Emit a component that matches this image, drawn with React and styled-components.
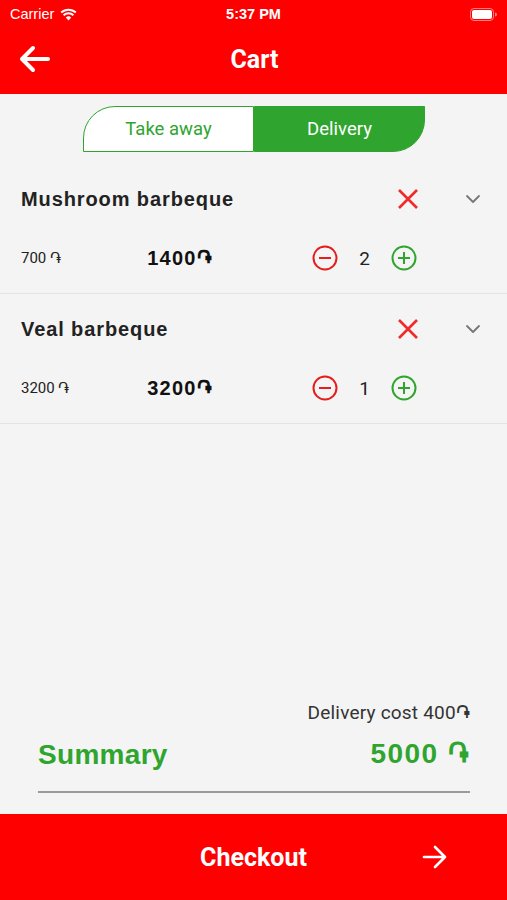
import React from 'react';
import styled, { createGlobalStyle } from 'styled-components';

const GlobalStyle = createGlobalStyle`
  html, body {
    margin: 0;
    padding: 0;
    background: #f4f4f4;
  }
  * {
    box-sizing: border-box;
  }
`;

const items = [
  { id: 1, title: 'Mushroom barbeque', price: '700 ֏', total: '1400֏', qty: 2 },
  { id: 2, title: 'Veal barbeque', price: '3200 ֏', total: '3200֏', qty: 1 },
];

const WifiIcon = () => (
  <svg width="17" height="13" viewBox="0 0 17 13">
    <path d="M8.5 12.5 L5.8 9.4 A4 4 0 0 1 11.2 9.4 Z" fill="#fff" />
    <path d="M3.6 7.2 A7 7 0 0 1 13.4 7.2" stroke="#fff" strokeWidth="2" fill="none" />
    <path d="M1.2 4.6 A10.6 10.6 0 0 1 15.8 4.6" stroke="#fff" strokeWidth="2" fill="none" />
  </svg>
);

const BatteryIcon = () => (
  <svg width="27" height="13" viewBox="0 0 27 13">
    <rect x="0.5" y="0.5" width="23" height="12" rx="3.5" stroke="rgba(255,255,255,0.5)" fill="none" />
    <rect x="2" y="2" width="20" height="9" rx="2" fill="#fff" />
    <path d="M25 4.5 A2 2 0 0 1 25 8.5 Z" fill="rgba(255,255,255,0.5)" />
  </svg>
);

const ArrowLeft = () => (
  <svg width="32" height="28" viewBox="0 0 32 28">
    <path d="M30 14 H4 M15 3 L4 14 L15 25" stroke="#fff" strokeWidth="4" strokeLinecap="round" strokeLinejoin="round" fill="none" />
  </svg>
);

const ArrowRight = () => (
  <svg width="26" height="24" viewBox="0 0 26 24">
    <path d="M2 12 H23 M13 2 L23 12 L13 22" stroke="#fff" strokeWidth="2.6" strokeLinecap="round" strokeLinejoin="round" fill="none" />
  </svg>
);

const CrossIcon = () => (
  <svg width="22" height="22" viewBox="0 0 22 22">
    <path d="M2 2 L20 20 M20 2 L2 20" stroke="#ee2a2a" strokeWidth="2.6" fill="none" />
  </svg>
);

const ChevronIcon = () => (
  <svg width="16" height="10" viewBox="0 0 16 10">
    <path d="M2 2 L8 8 L14 2" stroke="#777" strokeWidth="1.8" strokeLinecap="round" strokeLinejoin="round" fill="none" />
  </svg>
);

const CircleIcon = ({ color, plus }) => (
  <svg width="26" height="26" viewBox="0 0 26 26">
    <circle cx="13" cy="13" r="11.5" stroke={color} strokeWidth="2" fill="none" />
    <path d="M7 13 H19" stroke={color} strokeWidth="2" />
    {plus && <path d="M13 7 V19" stroke={color} strokeWidth="2" />}
  </svg>
);

const App = () => {
  return (
    <>
      <GlobalStyle />
      <Page>
        <Header>
          <StatusBar>
            <StatusLeft>
              Carrier <WifiIcon />
            </StatusLeft>
            <StatusTime>5:37 PM</StatusTime>
            <StatusRight>
              <BatteryIcon />
            </StatusRight>
          </StatusBar>
          <NavBar>
            <BackButton>
              <ArrowLeft />
            </BackButton>
            <NavTitle>Cart</NavTitle>
          </NavBar>
        </Header>

        <Content>
          <SegmentWrap>
            <Segment>
              <SegmentItem side="left">Take away</SegmentItem>
              <SegmentItem side="right" active>
                Delivery
              </SegmentItem>
            </Segment>
          </SegmentWrap>

          <CartList>
            {items.map((item) => (
              <Row key={item.id}>
                <TitleLine>
                  <ItemTitle>{item.title}</ItemTitle>
                  <RemoveBtn>
                    <CrossIcon />
                  </RemoveBtn>
                  <ExpandBtn>
                    <ChevronIcon />
                  </ExpandBtn>
                </TitleLine>
                <DetailLine>
                  <UnitPrice>{item.price}</UnitPrice>
                  <TotalPrice>{item.total}</TotalPrice>
                  <Counter>
                    <CountBtn>
                      <CircleIcon color="#e51d1d" />
                    </CountBtn>
                    <Qty>{item.qty}</Qty>
                    <CountBtn>
                      <CircleIcon color="#2fa52f" plus />
                    </CountBtn>
                  </Counter>
                </DetailLine>
              </Row>
            ))}
          </CartList>
        </Content>

        <Summary>
          <DeliveryCost>Delivery cost 400֏</DeliveryCost>
          <SummaryLine>
            <SummaryLabel>Summary</SummaryLabel>
            <SummaryLabel wide>5000 ֏</SummaryLabel>
          </SummaryLine>
          <Divider />
        </Summary>

        <CheckoutBar>
          <CheckoutText>Checkout</CheckoutText>
          <CheckoutArrow>
            <ArrowRight />
          </CheckoutArrow>
        </CheckoutBar>
      </Page>
    </>
  );
};

const Page = styled.div`
  display: flex;
  flex-direction: column;
  height: 900px;
  background: #f4f4f4;
  font-family: Roboto, 'DejaVu Sans', sans-serif;
`;

const Header = styled.div`
  background: #ff0000;
  color: #fff;
  height: 94px;
`;

const StatusBar = styled.div`
  display: grid;
  grid-template-columns: 1fr auto 1fr;
  align-items: center;
  height: 28px;
  padding: 0 10px;
  font-family: 'Liberation Sans', 'DejaVu Sans', sans-serif;
  font-size: 14.5px;
`;

const StatusLeft = styled.div`
  display: flex;
  align-items: center;
  gap: 6px;
`;

const StatusTime = styled.div`
  font-weight: 600;
`;

const StatusRight = styled.div`
  display: flex;
  justify-content: flex-end;
`;

const NavBar = styled.div`
  position: relative;
  display: flex;
  align-items: center;
  justify-content: center;
  height: 62px;
`;

const BackButton = styled.div`
  position: absolute;
  left: 18px;
  top: 17px;
  display: flex;
`;

const NavTitle = styled.div`
  font-size: 25px;
  font-weight: 700;
  padding-left: 2px;
`;

const Content = styled.div`
  flex: 1;
`;

const SegmentWrap = styled.div`
  display: flex;
  justify-content: center;
  padding: 12px 0;
`;

const Segment = styled.div`
  display: flex;
  width: 342px;
  height: 46px;
  margin-left: 1px;
`;

const SegmentItem = styled.div`
  flex: 1;
  display: flex;
  align-items: center;
  justify-content: center;
  font-size: 18.5px;
  border: 1.5px solid #2fa52f;
  color: ${(p) => (p.active ? '#fff' : '#2fa52f')};
  background: ${(p) => (p.active ? '#2fa52f' : '#fff')};
  border-radius: ${(p) => (p.side === 'left' ? '32px 0 0 0' : '0 0 32px 0')};
`;

const CartList = styled.div`
  display: flex;
  flex-direction: column;
`;

const Row = styled.div`
  height: 130px;
  padding: 11px 0 0 21px;
  border-bottom: 1.5px solid #e4e4e4;
`;

const TitleLine = styled.div`
  display: flex;
  align-items: center;
  height: 48px;
`;

const ItemTitle = styled.div`
  flex: 1;
  font-family: 'Liberation Sans', 'DejaVu Sans', sans-serif;
  font-size: 20px;
  font-weight: 700;
  letter-spacing: 0.9px;
  color: #222;
`;

const RemoveBtn = styled.div`
  display: flex;
  width: 22px;
  margin-right: 46px;
`;

const ExpandBtn = styled.div`
  display: flex;
  width: 16px;
  margin-right: 26px;
`;

const DetailLine = styled.div`
  display: flex;
  align-items: center;
  height: 30px;
  margin-top: 20px;
`;

const UnitPrice = styled.div`
  width: 100px;
  font-size: 15px;
  color: #222;
`;

const TotalPrice = styled.div`
  width: 118px;
  text-align: center;
  font-family: 'Liberation Sans', 'DejaVu Sans', sans-serif;
  font-size: 20px;
  font-weight: 700;
  letter-spacing: 1.2px;
  color: #111;
`;

const Counter = styled.div`
  display: flex;
  align-items: center;
  margin-left: 73px;
`;

const CountBtn = styled.div`
  display: flex;
`;

const Qty = styled.div`
  width: 53px;
  text-align: center;
  font-size: 19px;
  color: #222;
`;

const Summary = styled.div`
  padding: 0 37px 21px 38px;
`;

const DeliveryCost = styled.div`
  text-align: right;
  font-size: 19px;
  letter-spacing: 0.2px;
  color: #333;
`;

const SummaryLine = styled.div`
  display: flex;
  justify-content: space-between;
  align-items: center;
  margin-top: 14px;
`;

const SummaryLabel = styled.div`
  font-family: 'Liberation Sans', 'DejaVu Sans', sans-serif;
  font-size: 28px;
  font-weight: 700;
  letter-spacing: ${(p) => (p.wide ? '1.4px' : '0.3px')};
  color: #2fa52f;
`;

const Divider = styled.div`
  margin-top: 20px;
  height: 2px;
  background: #9a9a9a;
`;

const CheckoutBar = styled.div`
  position: relative;
  display: flex;
  align-items: center;
  justify-content: center;
  height: 86px;
  background: #ff0000;
  color: #fff;
`;

const CheckoutText = styled.div`
  font-size: 25px;
  font-weight: 700;
`;

const CheckoutArrow = styled.div`
  position: absolute;
  right: 59px;
  top: 31px;
  display: flex;
`;

export default App;
